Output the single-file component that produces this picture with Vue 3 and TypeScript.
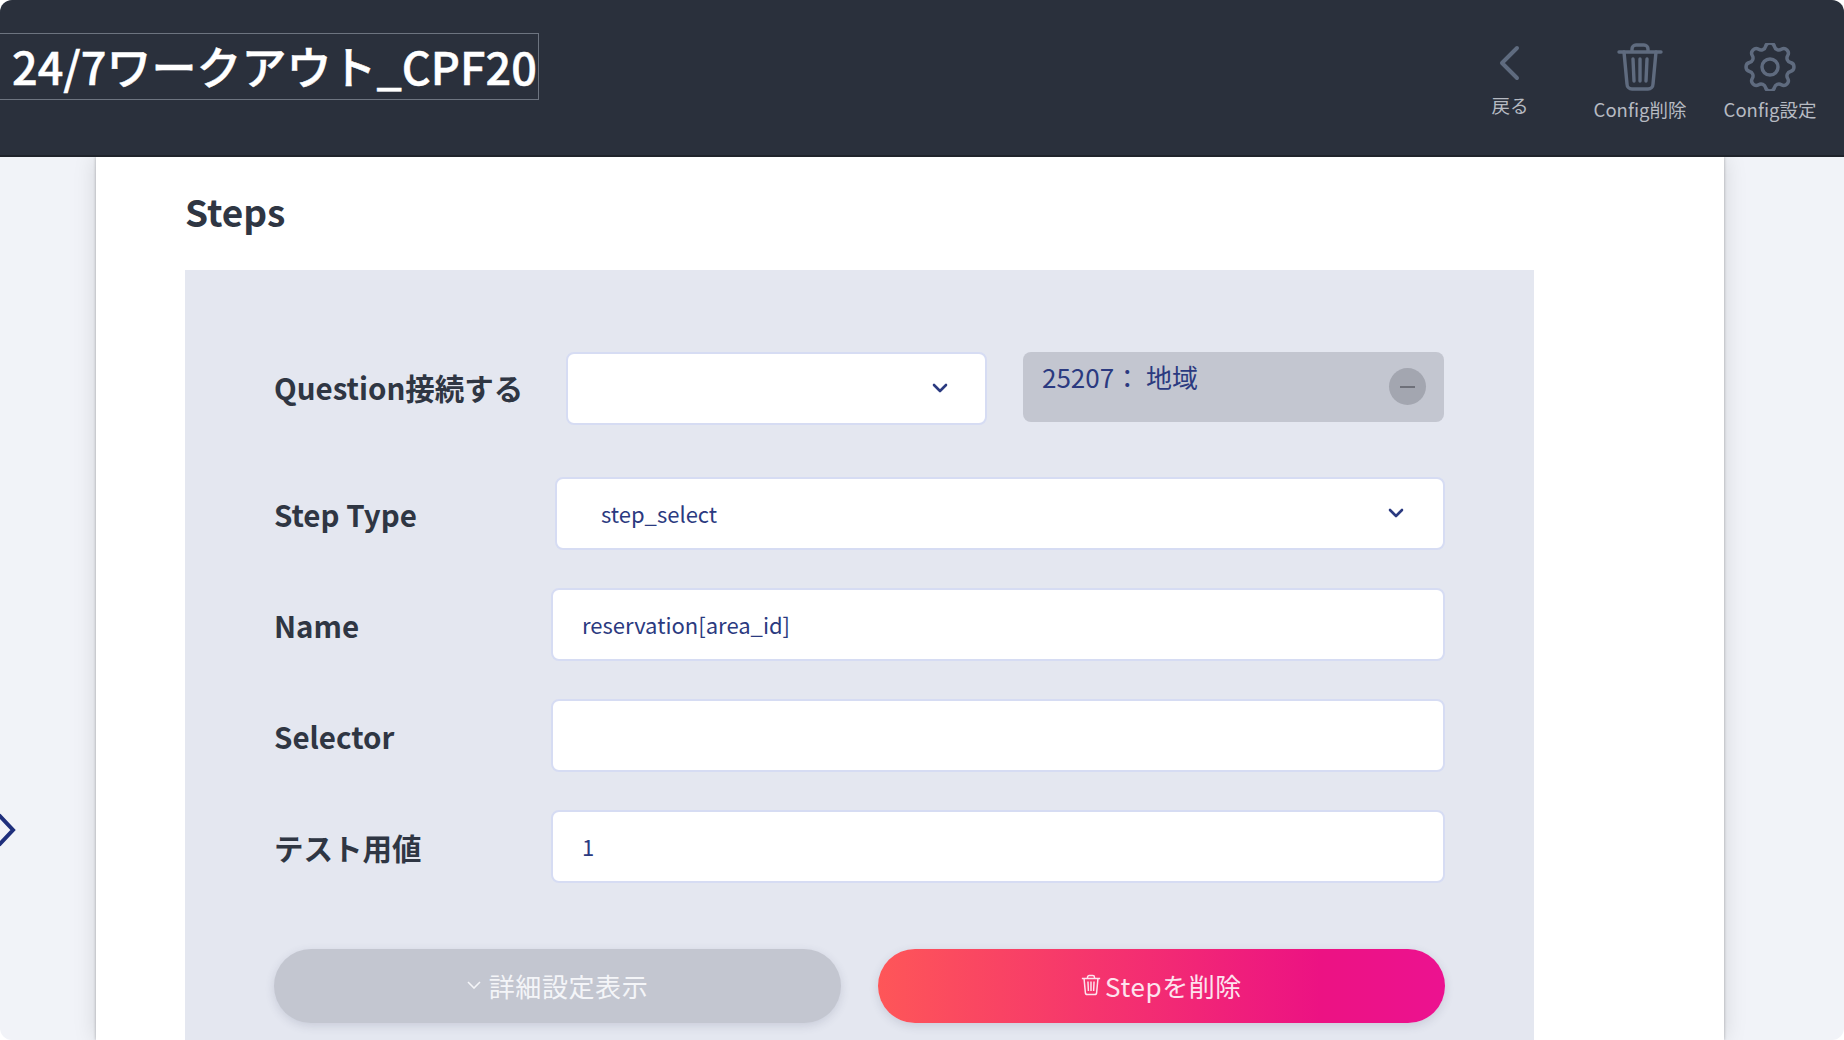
<script setup lang="ts">
type Field = {
  label: string;
  value: string;
  kind: string;
};

const fields: Field[] = [
  { label: 'Step Type', value: 'step_select', kind: 'type' },
  { label: 'Name', value: 'reservation[area_id]', kind: 'plain' },
  { label: 'Selector', value: '', kind: 'plain' },
  { label: 'テスト用値', value: '1', kind: 'plain' },
];
</script>

<template>
  <div class="window">
    <header class="topbar">
      <div class="title">24/7ワークアウト_CPF20</div>
      <nav class="actions">
        <a class="action back">
          <svg class="icon" width="30" height="48" viewBox="0 0 30 48" fill="none">
            <path d="M22 7 7 22l15 15" />
          </svg>
          <span>戻る</span>
        </a>
        <a class="action">
          <svg class="icon" width="46" height="48" viewBox="0 0 46 48" fill="none">
            <path d="M2 9h42M15 8V6a4 4 0 0 1 4-4h8a4 4 0 0 1 4 4v2" />
            <path d="M7 9l3 32a5 5 0 0 0 5 5h16a5 5 0 0 0 5-5l3-32" />
            <path d="M16 16l1 22M23 16v22M30 16l-1 22" />
          </svg>
          <span>Config削除</span>
        </a>
        <a class="action">
          <svg class="icon" width="66" height="48" viewBox="3 3 18 18" fill="none">
            <path class="thin" d="M10.325 4.317c.426-1.756 2.924-1.756 3.35 0a1.724 1.724 0 002.573 1.066c1.543-.94 3.31.826 2.37 2.37a1.724 1.724 0 001.065 2.572c1.756.426 1.756 2.924 0 3.35a1.724 1.724 0 00-1.066 2.573c.94 1.543-.826 3.31-2.37 2.37a1.724 1.724 0 00-2.572 1.065c-.426 1.756-2.924 1.756-3.35 0a1.724 1.724 0 00-2.573-1.066c-1.543.94-3.31-.826-2.37-2.37a1.724 1.724 0 00-1.065-2.572c-1.756-.426-1.756-2.924 0-3.35a1.724 1.724 0 001.066-2.573c-.94-1.543.826-3.31 2.37-2.37.996.608 2.296.07 2.572-1.065z" />
            <path class="thin" d="M15 12a3 3 0 11-6 0 3 3 0 016 0z" />
          </svg>
          <span>Config設定</span>
        </a>
      </nav>
    </header>

    <main class="content">
      <section class="card">
        <h2 class="heading">Steps</h2>
        <div class="panel">
          <div class="row first">
            <label class="label question">Question接続する</label>
            <div class="field select short">
              <svg class="chevron" width="16" height="10" viewBox="0 0 16 10" fill="none">
                <path d="M2 2l6 6 6-6" />
              </svg>
            </div>
            <div class="tag">
              <span class="tag-text">25207： 地域</span>
              <span class="tag-remove"><i></i></span>
            </div>
          </div>

          <div v-for="field in fields" :key="field.label" class="row" :class="field.kind">
            <label class="label">{{ field.label }}</label>
            <div class="field">
              <span>{{ field.value }}</span>
              <svg v-if="field.kind === 'type'" class="chevron" width="16" height="10" viewBox="0 0 16 10" fill="none">
                <path d="M2 2l6 6 6-6" />
              </svg>
            </div>
          </div>

          <div class="buttons">
            <button class="btn muted">
              <svg width="14" height="8" viewBox="0 0 14 8" fill="none">
                <path d="M1 1l6 6 6-6" />
              </svg>
              詳細設定表示
            </button>
            <button class="btn danger">
              <svg width="20" height="22" viewBox="0 0 46 48" fill="none">
                <path d="M2 9h42M15 8V6a4 4 0 0 1 4-4h8a4 4 0 0 1 4 4v2" />
                <path d="M7 9l3 32a5 5 0 0 0 5 5h16a5 5 0 0 0 5-5l3-32" />
                <path d="M16 16l1 22M23 16v22M30 16l-1 22" />
              </svg>
              Stepを削除
            </button>
          </div>
        </div>
      </section>
    </main>

    <svg class="side-toggle" width="16" height="34" viewBox="0 0 16 34" fill="none">
      <path d="M-1 2l14 15L-1 32" />
    </svg>
  </div>
</template>

<style>
html,
body {
  background: #fff;
  overflow: hidden;
}
</style>

<style scoped>
.window {
  position: relative;
  height: 1040px;
  display: flex;
  flex-direction: column;
  overflow: hidden;
  border-radius: 12px;
  background: #f1f3f8;
  color: #2f3643;
  font-family: "Noto Sans CJK JP", "Noto Sans", sans-serif;
}

.topbar {
  flex: none;
  height: 157px;
  box-sizing: border-box;
  padding-top: 33px;
  display: flex;
  justify-content: space-between;
  align-items: flex-start;
  background: #2a303c;
  border-bottom: 2px solid #1f232b;
  position: relative;
  z-index: 2;
}

.title {
  width: 540px;
  height: 67px;
  box-sizing: border-box;
  margin-left: -1px;
  padding-left: 12px;
  border: 1px solid #6d7480;
  color: #fff;
  font-size: 45px;
  font-weight: 500;
  line-height: 63px;
  -webkit-text-stroke: 0.5px #fff;
  white-space: nowrap;
  overflow: hidden;
}

.actions {
  display: flex;
  padding-top: 9px;
  padding-right: 9px;
}

.action {
  width: 130px;
  display: flex;
  flex-direction: column;
  align-items: center;
  color: #b6bac2;
  font-size: 18.5px;
  line-height: 24px;
}

.action span {
  margin-top: 6px;
}

.back span {
  margin-top: 4px;
}

.icon {
  margin-top: 1px;
}

.back .icon {
  margin-top: -1px;
}

.icon path {
  stroke: #5f6b7f;
  stroke-width: 3.4;
  stroke-linecap: round;
  stroke-linejoin: round;
}

.icon path.thin {
  stroke-width: 1.3;
}

.back .icon path {
  stroke-width: 4;
}

.content {
  flex: 1;
  min-height: 0;
  display: flex;
  padding: 0 120px 0 96px;
}

.card {
  flex: 1;
  box-sizing: border-box;
  padding: 0 190px 0 89px;
  background: #fff;
  box-shadow: 0 0 3px rgba(0, 0, 0, 0.28), 0 0 22px rgba(0, 0, 0, 0.13);
}

.heading {
  margin: 0;
  height: 113px;
  box-sizing: border-box;
  padding-top: 29px;
  font-size: 37px;
  font-weight: 700;
  line-height: 50px;
}

.panel {
  background: #e4e7f0;
  padding: 82px 89px 0;
  height: 800px;
  box-sizing: border-box;
}

.row {
  display: flex;
  align-items: center;
  margin-bottom: 38px;
}

.row.first {
  align-items: flex-start;
  margin-bottom: 52px;
}

.row.first .label {
  align-self: center;
  padding-bottom: 4px;
}

.label {
  flex: none;
  width: 277px;
  font-size: 29.5px;
  font-weight: 700;
}

.type .label {
  width: 281px;
}

.label.question {
  width: 292px;
}

.field {
  flex: 1;
  height: 73px;
  box-sizing: border-box;
  display: flex;
  align-items: center;
  justify-content: space-between;
  padding: 0 37px 2px 29px;
  background: #fff;
  border: 2px solid #d6dcf3;
  border-radius: 8px;
  color: #2b3a80;
  font-size: 22px;
}

.type .field {
  padding-left: 44px;
  padding-right: 39px;
}

.field.short {
  flex: none;
  width: 421px;
  justify-content: flex-end;
}

.chevron path {
  stroke: #2b3a80;
  stroke-width: 2.6;
  stroke-linecap: round;
  stroke-linejoin: round;
}

.tag {
  flex: none;
  width: 421px;
  height: 70px;
  margin-left: 36px;
  box-sizing: border-box;
  display: flex;
  justify-content: space-between;
  padding: 7px 18px 0 19px;
  background: #c3c6d0;
  border-radius: 8px;
  color: #2b3a80;
  font-size: 26px;
  line-height: 36px;
}

.tag-remove {
  width: 37px;
  height: 37px;
  margin-top: 9px;
  display: flex;
  align-items: center;
  justify-content: center;
  border-radius: 50%;
  background: #a3a6b0;
}

.tag-remove i {
  width: 15px;
  height: 2px;
  background: #6e7079;
}

.buttons {
  display: flex;
  justify-content: space-between;
  margin-top: 66px;
}

.btn {
  width: 567px;
  height: 74px;
  display: flex;
  align-items: center;
  justify-content: center;
  gap: 4px;
  border: none;
  border-radius: 37px;
  padding: 0 0 2px;
  font-family: inherit;
  font-size: 26px;
  letter-spacing: 0.6px;
  color: #f4f5f8;
  box-shadow: 0 3px 10px rgba(60, 70, 100, 0.16);
}

.btn.muted {
  gap: 8px;
  background: #c3c6d0;
}

.btn.muted path {
  stroke: #f4f5f8;
  stroke-width: 1.6;
}

.btn.danger {
  background: linear-gradient(90deg, #fe5658 0%, #ec1283 78%, #ec1290 100%);
  color: #fde3ee;
}

.btn.danger path {
  stroke: #fde3ee;
  stroke-width: 3.4;
}

.side-toggle {
  position: absolute;
  left: 0;
  top: 813px;
}

.side-toggle path {
  stroke: #1f2f7c;
  stroke-width: 4;
}
</style>
